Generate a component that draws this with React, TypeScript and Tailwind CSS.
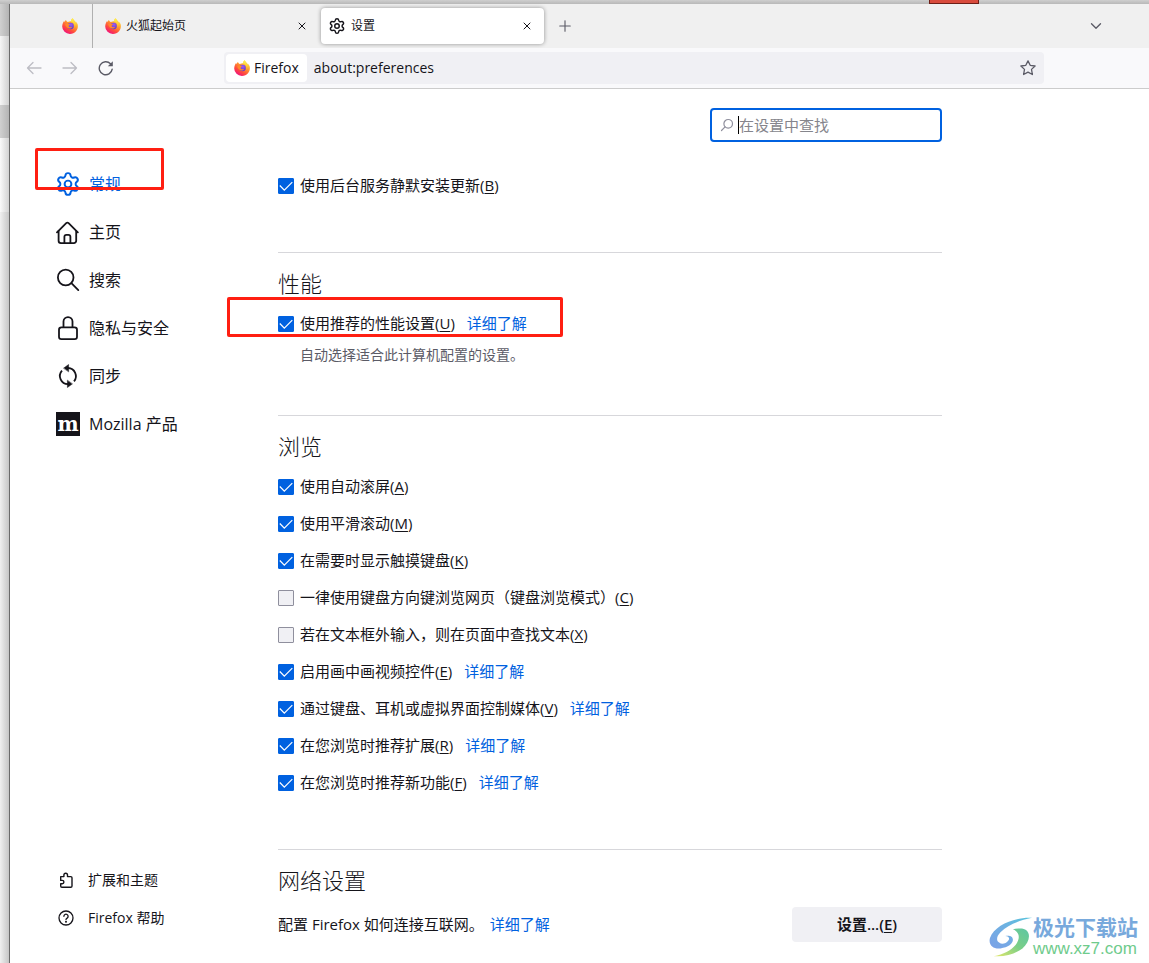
import React, { useState } from "react";
import { ChevronDown, Plus, X } from "lucide-react";

interface NavEntry {
  id: string;
  label: string;
  icon: React.ReactNode;
}

interface CheckOption {
  id: string;
  label: string;
  accessKey: string;
  checked: boolean;
  learnMore?: boolean;
}

interface IconProps {
  className?: string;
}

const FirefoxLogo: React.FC<IconProps & { id: string }> = ({
  className,
  id,
}) => (
  <svg viewBox="0 0 16 16" className={className} aria-hidden="true">
    <defs>
      <linearGradient id={`${id}-body`} x1="0.8" y1="0.1" x2="0.25" y2="0.95">
        <stop offset="0" stopColor="#ffe14a" />
        <stop offset="0.35" stopColor="#ff9a2e" />
        <stop offset="0.7" stopColor="#ff4b3e" />
        <stop offset="1" stopColor="#f0127c" />
      </linearGradient>
      <linearGradient id={`${id}-flame`} x1="0.4" y1="0" x2="0.6" y2="1">
        <stop offset="0" stopColor="#fff04f" />
        <stop offset="0.6" stopColor="#ffc934" />
        <stop offset="1" stopColor="#ff8a2a" stopOpacity="0.2" />
      </linearGradient>
      <radialGradient id={`${id}-globe`} cx="0.55" cy="0.3" r="0.8">
        <stop offset="0" stopColor="#9a5cf5" />
        <stop offset="1" stopColor="#5a35b8" />
      </radialGradient>
    </defs>
    <path
      d="M15.3 5.6c-.4-.9-1.1-1.8-1.7-2.1.4.8.6 1.5.7 2.1C13.3 3.1 11.6 2.2 10.7.2c-1 .6-1.7 1.9-1.8 3.1C7.7 3.3 6.7 3.6 5.9 4 5 3.7 4.3 3 4 2 3.2 2.4 2.6 3.3 2.5 4.1L1.9 3.3C1.3 4 .3 6 .2 8.4A7.7 7.7 0 0 0 8 16c5 0 8-4 7.9-8.1 0-.8-.2-1.6-.6-2.3z"
      fill={`url(#${id}-body)`}
    />
    <path
      d="M10.7.2C9.5.9 8.8 2.3 8.9 3.5c1.9.2 3.2 1.7 3.3 3.6.1 2.3-1.2 3.9-2.4 4.5 2.9-.3 4.9-2.6 4.5-6C13.3 3.1 11.6 2.2 10.7.2z"
      fill={`url(#${id}-flame)`}
    />
    <circle cx="8.6" cy="8" r="3.2" fill={`url(#${id}-globe)`} />
    <path
      d="M3.2 6.1c1-.8 2.3-.9 3.2-.3.9 0 1.7 0 1.9.3-.1.5-1.3.9-1.5 1.5-.4 1 .4 1.7 1.4 1.6.8-.1 1.3-.4 1.7-.2-.3 1.1-1.8 1.8-3.2 1.5C4.7 10.1 3.6 8.1 3.2 6.1z"
      fill="#ff8a2b"
    />
  </svg>
);

const GearIcon: React.FC<IconProps & { strokeWidth?: number }> = ({
  className,
  strokeWidth = 1.8,
}) => (
  <svg
    viewBox="1 1 22 22"
    className={className}
    fill="none"
    stroke="currentColor"
    strokeWidth={strokeWidth}
    strokeLinecap="round"
    strokeLinejoin="round"
    aria-hidden="true"
  >
    <path d="M9.671 4.136a2.34 2.34 0 0 1 4.659 0 2.34 2.34 0 0 0 3.319 1.915 2.34 2.34 0 0 1 2.33 4.033 2.34 2.34 0 0 0 0 3.831 2.34 2.34 0 0 1-2.33 4.033 2.34 2.34 0 0 0-3.319 1.915 2.34 2.34 0 0 1-4.659 0 2.34 2.34 0 0 0-3.32-1.915 2.34 2.34 0 0 1-2.33-4.033 2.34 2.34 0 0 0 0-3.831A2.34 2.34 0 0 1 6.35 6.051a2.34 2.34 0 0 0 3.319-1.915" />
    <circle cx="12" cy="12" r="3.1" />
  </svg>
);

const LineIcon: React.FC<React.PropsWithChildren<IconProps>> = ({
  className = "size-6",
  children,
}) => (
  <svg
    viewBox="0 0 24 24"
    className={className}
    fill="none"
    stroke="currentColor"
    strokeWidth="1.8"
    strokeLinecap="round"
    strokeLinejoin="round"
    aria-hidden="true"
  >
    {children}
  </svg>
);

const HomeIcon = () => (
  <LineIcon>
    <path d="M1 12.4 10.2 3.2a1.7 1.7 0 0 1 2.4 0l9.2 9.2" />
    <path d="M2.6 11v9.8a2.3 2.3 0 0 0 2.3 2.3h13a2.3 2.3 0 0 0 2.3-2.3V11" />
    <path d="M8.4 23v-6.2a2 2 0 0 1 2-2h2a2 2 0 0 1 2 2V23" />
  </LineIcon>
);

const SearchIcon = () => (
  <LineIcon>
    <circle cx="9.7" cy="9.5" r="7.8" />
    <path d="m15.4 15.2 6.9 6.9" />
  </LineIcon>
);

const LockIcon = () => (
  <LineIcon>
    <rect x="3" y="11.3" width="18" height="11.8" rx="2.4" />
    <path d="M7.5 11V5.6a4.5 4.5 0 0 1 9 0V11" />
  </LineIcon>
);

const SyncIcon = () => (
  <LineIcon>
    <path d="M12 4a8.1 8.1 0 0 1 6 13.3" strokeLinecap="butt" />
    <path d="M12 20.1A8.1 8.1 0 0 1 6 6.6" strokeLinecap="butt" />
    <path
      d="M7.8 4 12.6.5v7zM16.2 20.1l-4.8 3.4v-7z"
      fill="currentColor"
      strokeWidth="0.5"
    />
  </LineIcon>
);

const MozillaIcon = () => (
  <span className="flex size-6 items-center justify-center bg-[#15141a] font-['DejaVu_Serif',serif] text-xl leading-6 font-bold text-white">
    m
  </span>
);

const PuzzleIcon = () => (
  <svg viewBox="0 0 16 16" className="size-4" fill="none" stroke="currentColor" strokeWidth="1.4" strokeLinejoin="round" aria-hidden="true">
    <path d="M2.7 4.6h3.2V3a1.8 1.8 0 0 1 3.6 0v1.6h3.3a1.2 1.2 0 0 1 1.2 1.2v8.3a1.2 1.2 0 0 1-1.2 1.2H3.9a1.2 1.2 0 0 1-1.2-1.2v-2.3h1.5a1.7 1.7 0 0 0 0-3.4H2.7z" />
  </svg>
);

const HelpIcon = () => (
  <svg viewBox="0 0 16 16" className="size-4" fill="none" stroke="currentColor" strokeWidth="1.3" strokeLinecap="round" aria-hidden="true">
    <circle cx="8" cy="8" r="7" />
    <path d="M5.9 6.3a2.1 2.1 0 1 1 3.2 1.8c-.7.4-1.1.8-1.1 1.5" />
    <circle cx="8" cy="11.7" r="0.4" fill="currentColor" />
  </svg>
);

const navEntries: NavEntry[] = [
  { id: "general", label: "常规", icon: <GearIcon className="size-6" /> },
  { id: "home", label: "主页", icon: <HomeIcon /> },
  { id: "search", label: "搜索", icon: <SearchIcon /> },
  { id: "privacy", label: "隐私与安全", icon: <LockIcon /> },
  { id: "sync", label: "同步", icon: <SyncIcon /> },
  { id: "mozilla", label: "Mozilla 产品", icon: <MozillaIcon /> },
];

const browsingOptions: CheckOption[] = [
  { id: "autoscroll", label: "使用自动滚屏", accessKey: "A", checked: true },
  { id: "smooth", label: "使用平滑滚动", accessKey: "M", checked: true },
  { id: "osk", label: "在需要时显示触摸键盘", accessKey: "K", checked: true },
  { id: "caret", label: "一律使用键盘方向键浏览网页（键盘浏览模式）", accessKey: "C", checked: false },
  { id: "typeahead", label: "若在文本框外输入，则在页面中查找文本", accessKey: "X", checked: false },
  { id: "pip", label: "启用画中画视频控件", accessKey: "E", checked: true, learnMore: true },
  { id: "media", label: "通过键盘、耳机或虚拟界面控制媒体", accessKey: "V", checked: true, learnMore: true },
  { id: "cfr-addons", label: "在您浏览时推荐扩展", accessKey: "R", checked: true, learnMore: true },
  { id: "cfr-features", label: "在您浏览时推荐新功能", accessKey: "F", checked: true, learnMore: true },
];

const LearnMore = () => (
  <a href="#learn-more" className="text-[#0061e0]">
    详细了解
  </a>
);

const CheckRow: React.FC<{ option: CheckOption }> = ({ option }) => {
  const [checked, setChecked] = useState(option.checked);

  return (
    <div className="flex h-[37px] items-center gap-3">
      <label htmlFor={option.id} className="flex items-center gap-[6px]">
        <span className="grid size-4">
          <input
            id={option.id}
            type="checkbox"
            checked={checked}
            onChange={(e) => setChecked(e.target.checked)}
            className="col-start-1 row-start-1 size-4 appearance-none rounded-[1px] border border-[#8f8f9d] bg-[#f0f0f4] checked:border-[#0061e0] checked:bg-[#0061e0]"
          />
          {checked && (
            <svg viewBox="0 0 16 16" className="pointer-events-none col-start-1 row-start-1 size-4" fill="none" stroke="#fff" strokeWidth="1.2" aria-hidden="true">
              <path d="m1.8 7.5 4.5 4.7 8-8" />
            </svg>
          )}
        </span>
        <span>
          {option.label}(<u className="underline-offset-2">{option.accessKey}</u>)
        </span>
      </label>
      {option.learnMore && <LearnMore />}
    </div>
  );
};

const SectionTitle: React.FC<React.PropsWithChildren> = ({ children }) => (
  <h2 className="mb-2 text-[22px] leading-7 font-light">{children}</h2>
);

const sectionClass = "mt-12 border-t border-[#d7d7db] pt-4";

const TabStrip = () => (
  <div className="flex h-11 items-center bg-[#f0f0f0] text-xs text-[#15141a]">
    <button aria-label="Firefox" className="flex h-full w-[83px] items-center justify-end border-r border-[#b0b0b0] pr-[14px]">
      <FirefoxLogo id="pinned" className="size-4" />
    </button>
    <div className="flex h-9 w-[228px] items-center pr-[13px] pl-3">
      <FirefoxLogo id="start" className="mr-[5px] size-4" />
      <span className="flex-1">火狐起始页</span>
      <button aria-label="关闭标签页">
        <X className="size-3" strokeWidth={2} />
      </button>
    </div>
    <div className="flex h-9 w-[223px] items-center rounded-sm bg-white pr-[11px] pl-2 shadow-[0_0_4px_rgba(0,0,0,0.4)]">
      <GearIcon className="mr-[6px] size-4" strokeWidth={2} />
      <span className="flex-1">设置</span>
      <button aria-label="关闭标签页">
        <X className="size-3" strokeWidth={2} />
      </button>
    </div>
    <button aria-label="新建标签页" className="ml-3 text-[#5b5b66]">
      <Plus className="size-[18px]" strokeWidth={1.5} />
    </button>
    <button aria-label="列出所有标签页" className="mr-11 ml-auto text-[#5b5b66]">
      <ChevronDown className="size-[18px]" strokeWidth={1.8} />
    </button>
  </div>
);

const Toolbar = () => (
  <div className="flex items-center border-b border-[#cccccc] bg-[#f9f9fb] py-1 pl-4 text-[#15141a]">
    <div className="flex w-[198px] gap-5">
      <button aria-label="后退" className="text-[#bdbdc4]">
        <svg viewBox="0 0 16 16" className="size-4" fill="none" stroke="currentColor" strokeWidth="1.3" strokeLinecap="round" strokeLinejoin="round">
          <path d="M15 8H1.5M7 2.5 1.5 8 7 13.5" />
        </svg>
      </button>
      <button aria-label="前进" className="text-[#bdbdc4]">
        <svg viewBox="0 0 16 16" className="size-4" fill="none" stroke="currentColor" strokeWidth="1.3" strokeLinecap="round" strokeLinejoin="round">
          <path d="M1 8h13.5M9 2.5 14.5 8 9 13.5" />
        </svg>
      </button>
      <button aria-label="重新加载" className="text-[#5b5b66]">
        <svg viewBox="0 0 16 16" className="size-4" fill="none" stroke="currentColor" strokeWidth="1.4" strokeLinecap="round">
          <path d="M14.2 9.2A6.5 6.5 0 1 1 12.5 3.8" />
          <path d="M14.8 1.3v5h-5z" fill="currentColor" stroke="none" />
        </svg>
      </button>
    </div>
    <div className="mr-[105px] flex h-8 flex-1 items-center rounded-sm bg-[#f0f0f4] pr-2 pl-[2px] text-sm">
      <button className="flex h-7 items-center gap-1 rounded-sm bg-white px-2">
        <FirefoxLogo id="identity" className="size-4" />
        Firefox
      </button>
      <input
        type="text"
        aria-label="地址栏"
        defaultValue="about:preferences"
        className="ml-[7px] min-w-0 flex-1 bg-transparent outline-none"
      />
      <button aria-label="为此页添加书签" className="text-[#5b5b66]">
        <svg viewBox="0 0 16 16" className="size-4" fill="none" stroke="currentColor" strokeWidth="1.3" strokeLinejoin="round">
          <path d="M8 .9 10.2 5.3l4.9.7-3.6 3.4.9 5.1L8 12.1l-4.4 2.4.9-5.1L.9 6l4.9-.7z" />
        </svg>
      </button>
    </div>
  </div>
);

const Sidebar = () => (
  <nav className="flex w-[268px] shrink-0 flex-col justify-between pt-[71px] pb-[26px] text-[#15141a]">
    <ul>
      {navEntries.map((entry) => (
        <li key={entry.id} className="relative">
          <a
            href={`#${entry.id}`}
            className={`flex h-12 items-center gap-[9px] pl-[46px] text-base ${
              entry.id === "general" ? "text-[#0061e0]" : ""
            }`}
          >
            {entry.icon}
            {entry.label}
          </a>
          {entry.id === "general" && (
            <div className="pointer-events-none absolute -top-3 left-[25px] h-[42px] w-[129px] rounded-xs border-3 border-[#ff1f12]" />
          )}
        </li>
      ))}
    </ul>
    <div className="pl-12 text-sm">
      <a href="#addons" className="flex h-[38px] items-center gap-[14px]">
        <PuzzleIcon />
        扩展和主题
      </a>
      <a href="#help" className="flex h-[38px] items-center gap-[14px]">
        <HelpIcon />
        Firefox 帮助
      </a>
    </div>
  </nav>
);

const Preferences = () => (
  <main className="max-w-[664px] flex-1 pt-[19px] text-[15px] text-[#15141a]">
    <label className="ml-auto flex h-[34px] w-[232px] items-center rounded-sm border-2 border-[#0061e0] pl-2">
      <svg viewBox="0 0 14 14" className="mr-1 size-[14px]" fill="none" stroke="#8f8f9d" strokeWidth="1.2" strokeLinecap="round" aria-hidden="true">
        <circle cx="8.2" cy="5.8" r="4.3" />
        <path d="M5.1 8.9 1.5 12.5" />
      </svg>
      <span className="h-[18px] w-px bg-black" />
      <input
        type="search"
        aria-label="在设置中查找"
        placeholder="在设置中查找"
        className="min-w-0 flex-1 outline-none placeholder:text-[#85858c]"
      />
    </label>

    <div className="mt-[25px]">
      <CheckRow option={{ id: "silent-update", label: "使用后台服务静默安装更新", accessKey: "B", checked: true }} />
    </div>

    {/* Performance */}
    <section className={sectionClass}>
      <SectionTitle>性能</SectionTitle>
      <div className="relative">
        <CheckRow option={{ id: "performance", label: "使用推荐的性能设置", accessKey: "U", checked: true, learnMore: true }} />
        <div className="pointer-events-none absolute -top-2 -left-[51px] h-10 w-[336px] rounded-xs border-3 border-[#ff1f12]" />
      </div>
      <p className="mt-1 ml-[22px] pb-1 text-sm leading-[17px] text-[#5b5b66]">
        自动选择适合此计算机配置的设置。
      </p>
    </section>

    {/* Browsing */}
    <section className={sectionClass}>
      <SectionTitle>浏览</SectionTitle>
      {browsingOptions.map((option) => (
        <CheckRow key={option.id} option={option} />
      ))}
    </section>

    {/* Network */}
    <section className={sectionClass}>
      <SectionTitle>网络设置</SectionTitle>
      <div className="flex items-center justify-between pt-[5px]">
        <p className="flex gap-[6px]">
          <span>配置 Firefox 如何连接互联网。</span>
          <LearnMore />
        </p>
        <button className="h-[35px] w-[150px] rounded-sm bg-[#f0f0f4] font-semibold">
          设置...(<u className="underline-offset-2">E</u>)
        </button>
      </div>
    </section>
  </main>
);

const Watermark = () => (
  <div className="absolute right-[11px] bottom-1 flex items-center">
    <svg viewBox="0 0 46 42" className="h-[42px] w-11" aria-hidden="true">
      <defs>
        <linearGradient id="swirl-blue" x1="1" y1="0" x2="0.2" y2="1">
          <stop offset="0" stopColor="#58c3dc" />
          <stop offset="0.5" stopColor="#6fb0e2" />
          <stop offset="1" stopColor="#7aa4e6" />
        </linearGradient>
        <linearGradient id="swirl-green" x1="1" y1="0" x2="0" y2="1">
          <stop offset="0" stopColor="#5cc6a4" />
          <stop offset="0.5" stopColor="#7ccf86" />
          <stop offset="1" stopColor="#e6e96a" />
        </linearGradient>
      </defs>
      <path
        d="M45 1C28 0 6 8 1 22c-2 8 4 12 11 11 8-1 13-5 13-9 0-4-4-5-8-4 4 0 5 3 3 5-2 3-7 4-9 2-4-2-3-7 1-11C20 8 31 4 45 1z"
        fill="url(#swirl-blue)"
      />
      <path
        d="M25 13c5-1 11-2 14 1 5 4 3 13-4 19-8 6-19 9-30 8 10-2 18-6 23-12 5-7 4-13-3-16z"
        fill="url(#swirl-green)"
      />
    </svg>
    <div>
      <div className="text-[21px] leading-6 font-bold text-[#78a9dc]">极光下载站</div>
      <div className="font-['Liberation_Sans',Arial,sans-serif] text-[17px] leading-5 text-[#6fcb8c]">
        www.xz7.com
      </div>
    </div>
  </div>
);

const App: React.FC = () => (
  <div className="relative flex min-h-screen flex-col bg-white font-['Open_Sans','Noto_Sans_CJK_SC',sans-serif]">
    {/* Edge of the window behind */}
    <div className="flex h-1 justify-end bg-linear-to-b from-[#cfcfcf] to-[#b8b8b8] pr-[170px]">
      <div className="w-[50px] border-x border-b border-[#6e1f18] bg-[#d94b3d]" />
    </div>
    <div className="flex flex-1">
      <div className="flex w-[9px] shrink-0 flex-col bg-linear-to-r from-[#f0f0f0] to-[#c6c6c6]">
        <div className="h-8 bg-linear-to-r from-[#d0d0d0] to-[#b4b4b4]" />
        <div className="h-[69px] bg-linear-to-r from-[#f6f6f6] to-[#d0d0d0]" />
        <div className="h-[33px] bg-linear-to-r from-[#d0d0d0] to-[#b4b4b4]" />
        <div className="h-[74px] bg-linear-to-r from-[#fafafa] to-[#d2d2d2]" />
      </div>
      <div className="flex min-w-0 flex-1 flex-col border-l border-[#6b6b6b]">
        <TabStrip />
        <Toolbar />
        <div className="flex flex-1">
          <Sidebar />
          <Preferences />
        </div>
      </div>
    </div>
    <Watermark />
  </div>
);

export default App;
